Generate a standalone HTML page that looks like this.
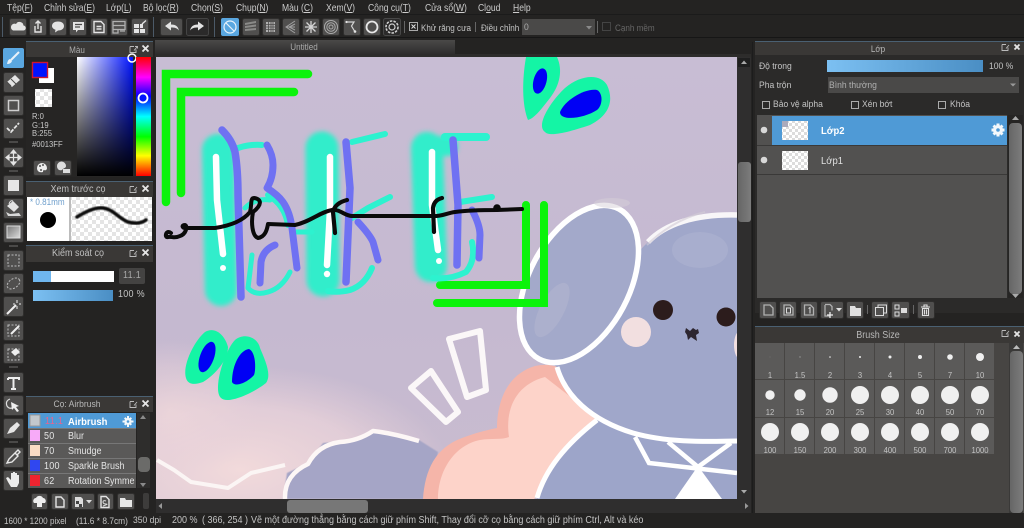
<!DOCTYPE html>
<html><head><meta charset="utf-8"><style>
html,body{margin:0;padding:0;background:#242322;overflow:hidden;width:1024px;height:528px}
body{position:relative;font-family:"Liberation Sans","Noto Sans CJK SC",sans-serif;font-size:10px;color:#c4c4c4}
#o{position:absolute;left:0;top:0;width:1024px;height:528px;overflow:hidden}
#w{position:absolute;left:0;top:0;width:1024px;height:528px;filter:blur(.35px)}
svg.m{position:absolute;left:0;top:0;display:block}
.t{position:absolute;white-space:nowrap;line-height:12px;transform:scaleX(.9);transform-origin:left center}
.c{transform:translateX(-50%) scaleX(.9);transform-origin:center}
.b{fill:#504f4e;stroke:#2f2e2d;stroke-width:1}
.i{fill:none;stroke:#e4e4e4;stroke-width:1.4}
.f{fill:#e4e4e4}
.g{fill:#a8a8a8}
.gs{fill:none;stroke:#b0b0b0;stroke-width:1.3}
.mn{top:2px;font-size:10.500px;color:#cccccc;transform:scaleX(.815)}
.st{top:515px;font-size:10px}
.r{font-size:10px;color:#e4e4e4}
.n{font-size:8.500px}
</style></head><body><div id="o"><div id="w">
<svg class="m" width="1024" height="528" viewBox="0 0 1024 528" xmlns="http://www.w3.org/2000/svg">
<defs>
<linearGradient id="bg" x1="0" y1="0" x2="0" y2="1"><stop offset="0" stop-color="#c8bdd4"/><stop offset=".6" stop-color="#c5b9d0"/><stop offset="1" stop-color="#c9bccf"/></linearGradient>
<radialGradient id="pk" gradientUnits="userSpaceOnUse" cx="0" cy="0" r="1" gradientTransform="translate(240 470) scale(210 105)"><stop offset="0" stop-color="#f2dadb"/><stop offset=".6" stop-color="#ead3da" stop-opacity=".75"/><stop offset="1" stop-color="#e6d0da" stop-opacity="0"/></radialGradient>
<radialGradient id="pk2" gradientUnits="userSpaceOnUse" cx="0" cy="0" r="1" gradientTransform="translate(170 410) scale(90 70)"><stop offset="0" stop-color="#f2dadb" stop-opacity=".6"/><stop offset=".6" stop-color="#ead3da" stop-opacity=".45"/><stop offset="1" stop-color="#e6d0da" stop-opacity="0"/></radialGradient>
<linearGradient id="hue" x1="0" y1="0" x2="0" y2="1"><stop offset="0" stop-color="#f00"/><stop offset=".17" stop-color="#f0f"/><stop offset=".33" stop-color="#00f"/><stop offset=".5" stop-color="#0ff"/><stop offset=".67" stop-color="#0f0"/><stop offset=".83" stop-color="#ff0"/><stop offset="1" stop-color="#f00"/></linearGradient>
<linearGradient id="h1" x1="0" y1="0" x2="1" y2="0"><stop offset="0" stop-color="#fff"/><stop offset="1" stop-color="#0013ff"/></linearGradient>
<linearGradient id="h2" x1="0" y1="0" x2="0" y2="1"><stop offset="0" stop-color="#000" stop-opacity="0"/><stop offset="1" stop-color="#000"/></linearGradient>
<linearGradient id="bar" x1="0" y1="0" x2="1" y2="0"><stop offset="0" stop-color="#7cc0f2"/><stop offset="1" stop-color="#4a8ec4"/></linearGradient>
<linearGradient id="tab" x1="0" y1="0" x2="0" y2="1"><stop offset="0" stop-color="#4a4948"/><stop offset="1" stop-color="#2e2d2d"/></linearGradient>
<linearGradient id="sb" x1="0" y1="0" x2="1" y2="0"><stop offset="0" stop-color="#666"/><stop offset="1" stop-color="#7c7c7c"/></linearGradient>
<linearGradient id="gr" x1="0" y1="0" x2="1" y2="1"><stop offset="0" stop-color="#777"/><stop offset="1" stop-color="#ddd"/></linearGradient>
<pattern id="ck" width="8" height="8" patternUnits="userSpaceOnUse"><rect width="8" height="8" fill="#fff"/><rect width="4" height="4" fill="#e4e4e4"/><rect x="4" y="4" width="4" height="4" fill="#e4e4e4"/></pattern>
<pattern id="ck2" width="6" height="6" patternUnits="userSpaceOnUse"><rect width="6" height="6" fill="#fff"/><rect width="3" height="3" fill="#dcdcdc"/><rect x="3" y="3" width="3" height="3" fill="#dcdcdc"/></pattern>
<filter id="gl" x="-60%" y="-20%" width="220%" height="140%"><feGaussianBlur stdDeviation="2.500"/></filter>
<filter id="s1"><feGaussianBlur stdDeviation=".5"/></filter>
<clipPath id="cv"><rect x="156" y="57" width="581" height="442"/></clipPath>
</defs>

<!-- chrome -->
<rect width="1024" height="528" fill="#242322"/>
<rect y="14" width="1024" height="1" fill="#1b1b1b"/>
<rect y="37" width="1024" height="1" fill="#161616"/>
<rect x="155" y="40" width="300" height="14" fill="url(#tab)"/>
<rect x="155" y="54" width="596" height="3" fill="#2d2c2b"/>

<!-- toolbar -->
<rect x="2" y="17" width="1" height="20" fill="#4c5a68"/>
<g>
<rect class="b" x="9.500" y="18.500" width="17" height="17" rx="2"/>
<rect class="b" x="29.500" y="18.500" width="17" height="17" rx="2"/>
<rect class="b" x="49.500" y="18.500" width="17" height="17" rx="2"/>
<rect class="b" x="69.500" y="18.500" width="17" height="17" rx="2"/>
<rect class="b" x="90.500" y="18.500" width="17" height="17" rx="2"/>
<rect class="b" x="110.500" y="18.500" width="17" height="17" rx="2"/>
<rect class="b" x="131.500" y="18.500" width="17" height="17" rx="2"/>
<rect x="153" y="17" width="1" height="20" fill="#4c5a68"/>
<rect class="b" x="160.500" y="18.500" width="22" height="17" rx="2"/>
<rect x="186.500" y="18.500" width="22" height="17" rx="2" fill="#2b2a2a" stroke="#444"/>
<rect x="214" y="17" width="1" height="20" fill="#4c5a68"/>
<rect x="221" y="18" width="18" height="18" rx="2" fill="#5aa7e0"/>
<rect class="b" x="242.500" y="18.500" width="17" height="17" rx="2"/>
<rect class="b" x="262.500" y="18.500" width="17" height="17" rx="2"/>
<rect class="b" x="282.500" y="18.500" width="17" height="17" rx="2"/>
<rect class="b" x="302.500" y="18.500" width="17" height="17" rx="2"/>
<rect class="b" x="322.500" y="18.500" width="17" height="17" rx="2"/>
<rect class="b" x="343.500" y="18.500" width="17" height="17" rx="2"/>
<rect class="b" x="363.500" y="18.500" width="17" height="17" rx="2"/>
<rect x="383.500" y="18.500" width="17" height="17" rx="2" fill="#2b2a2a" stroke="#484848"/>
</g>
<!-- toolbar icons -->
<path class="f" d="M13 30.500h10a2.500 2.500 0 0 0 .5-5 4 4 0 0 0-7.500-1.500 3.300 3.300 0 0 0-3 6.500z"/>
<path class="i" d="M35 26v6h6v-6M38 29v-8M35.500 23.500L38 21l2.500 2.500"/>
<path class="f" d="M52 26c0-3 2.700-4.500 6-4.500s6 1.500 6 4.500-2.700 4.500-6 4.500l-3 2 .5-2.700c-2-.7-3.500-2-3.500-3.800z"/>
<path class="f" d="M73 22h11v8h-6l-2 2.500V30h-3z"/><path d="M75 24.500h7M75 27h5" stroke="#4b4a49" stroke-width="1.200"/>
<path class="i" d="M94 21.500h7l3 3v8h-10z"/><path class="i" d="M96.500 26.500h5M96.500 29h5" stroke-width="1"/>
<path class="gs" d="M113 21.500h12v4h-12zM113 25.500h12v4h-12zM113 29.500h5v3.500h-5zM120 31h5"/>
<path class="f" d="M134 24h5v4h-5zM140 24h3v4h-3zM134 29h5v4h-5zM140 29h5v4h-5z"/><path class="i" d="M142 24l4-3.500"/>
<path class="f" d="M165 26l6-4.500v3c5 0 7 2 8 6-2-2.500-4-3-8-3v3z"/>
<path class="f" d="M204 26l-6-4.500v3c-5 0-7 2-8 6 2-2.500 4-3 8-3v3z"/>
<circle cx="230" cy="27" r="6" fill="none" stroke="#e8f2fa" stroke-width="1.200"/><path d="M226 23l8 8" stroke="#e8f2fa" stroke-width="1.200"/>
<path d="M245 23l11-2v2l-11 2zM245 26l11-1.500v2l-11 1.500zM245 29l11-1v2l-11 1z" fill="#8a8a88"/>
<path d="M266 22h9v10h-9z" fill="#b0b0b0"/><path d="M266 24.500h9M266 27h9M266 29.500h9M268.500 22v10M271 22v10M273 22v10" stroke="#4b4a49" stroke-width=".8"/>
<path d="M295 21l-9 6 9 6M295 24l-6 3 6 3M286 27h9" fill="none" stroke="#a0a0a0" stroke-width="1"/>
<path d="M305 27h12M311 21v12M306.500 22.500l9 9M315.500 22.500l-9 9" stroke="#d4d4d4" stroke-width="1.300"/>
<circle cx="331" cy="27" r="6.500" fill="none" stroke="#aaa" stroke-width="1"/><circle cx="331" cy="27" r="4.200" fill="none" stroke="#aaa" stroke-width="1"/><circle cx="331" cy="27" r="2" fill="none" stroke="#aaa" stroke-width="1"/>
<path d="M347 22h7l-2.500 4 3 5" fill="none" stroke="#d4d4d4" stroke-width="1.200"/><circle cx="346.500" cy="22" r="1.100" fill="#e4e4e4"/><circle cx="355" cy="31.500" r="1.300" fill="#e4e4e4"/>
<circle cx="372" cy="27" r="5.500" fill="none" stroke="#e8e8e8" stroke-width="1.800"/>
<circle cx="392" cy="27" r="3" fill="none" stroke="#cfcfcf" stroke-width="1.200"/><circle cx="392" cy="27" r="6" fill="none" stroke="#cfcfcf" stroke-width="1.600" stroke-dasharray="2.500 1.200"/>
<rect x="404" y="21" width="1" height="12" fill="#666"/>
<rect x="409.500" y="22.500" width="8" height="8" fill="none" stroke="#aaa"/><path d="M411.500 24.500l4 4M415.500 24.500l-4 4" stroke="#ddd"/>
<rect x="475" y="22" width="1" height="10" fill="#666"/>
<rect x="522" y="19" width="73" height="16" fill="#4a4948"/><path d="M586 26h6l-3 3.500z" fill="#8a8a8a"/>
<rect x="597" y="21" width="1" height="12" fill="#666"/>
<rect x="602.500" y="22.500" width="8" height="8" fill="none" stroke="#444"/>

<!-- canvas -->
<g clip-path="url(#cv)">
<rect x="156" y="57" width="581" height="442" fill="url(#bg)"/>
<rect x="156" y="365" width="294" height="134" fill="url(#pk)"/>
<rect x="156" y="340" width="104" height="140" fill="url(#pk2)"/>
<!-- clouds -->
<path d="M283 499L287 473 308 463 323 443 358 440 373 430 392 433 419 440 438 452 430 499Z" fill="#a5a5c6" filter="url(#s1)"/>
<path d="M157 460L174 470 191 482 228 488 251 473 285 465" fill="none" stroke="#fbf5f4" stroke-width="4" stroke-linejoin="round"/>
<path d="M285 499Q284 475 308 464 318 445 340 442 358 441 373 431 392 433 419 441 436 452" fill="none" stroke="#fdf7f6" stroke-width="4.500" stroke-linejoin="round"/>
<!-- heart -->
<path d="M423 499C425 470 435 448 462 438 475 433 487 430 497 428 497 405 505 375 535 366 545 364 552 365 557 367L600 420 534 499Z" fill="#f5b5a9"/>
<path d="M438 499C438 470 455 445 480 440 492 438 502 440 509 437 505 410 515 385 545 377L600 420 534 499Z" fill="#fdd3c9"/>
<!-- head/body -->
<path d="M595 420C565 445 545 470 537 499H737V425Z" fill="#9da5c9"/>
<path d="M597 420C565 445 545 470 537 498" fill="none" stroke="#fff" stroke-width="5"/>
<path d="M737 215C700 213 665 225 645 245L540 355 557 367C565 395 590 420 633 433 665 442 700 440 737 440Z" fill="#a0a7ca"/>
<path d="M557 367C565 395 590 420 633 433 665 442 700 442 737 441" fill="none" stroke="#fff" stroke-width="5"/>
<path d="M648 242C665 224 695 214 737 215" fill="none" stroke="#f8f6f8" stroke-width="5.500"/>
<path d="M647 245C660 232 680 218 705 212" fill="none" stroke="#d2cbd6" stroke-width="2" opacity=".6"/>
<ellipse cx="579" cy="284" rx="50" ry="85" transform="rotate(28 579 284)" fill="#a3a9ca" stroke="#fff" stroke-width="5.500"/>
<ellipse cx="612" cy="203" rx="18" ry="5" fill="#d6cfd7" opacity=".5"/>
<ellipse cx="552" cy="310" rx="12" ry="30" transform="rotate(28 552 310)" fill="#b6b8d0" opacity=".5"/>
<ellipse cx="700" cy="250" rx="28" ry="18" fill="#b0b6d2" opacity=".5"/>
<circle cx="663" cy="310" r="10" fill="#2c1c1c"/>
<circle cx="726" cy="317" r="9.500" fill="#2c1c1c"/>
<circle cx="636" cy="332" r="15" fill="#f2dfe0"/>
<ellipse cx="740" cy="345" rx="6" ry="14" fill="#f2dfe0"/>
<path d="M686 328l4 3 3-3 3 2 2-1 1 4-3 2 1 6-3-2-3-2-3 3-1-5-2-3z" fill="#2d2630"/>
<path d="M635 437L649 463 737 473M668 442L698 467M731 443L698 467" fill="none" stroke="#fff" stroke-width="4.500"/>
<path d="M675 499L698 466 722 499Z" fill="#fff"/>
<!-- exclaim -->
<path d="M449 339L480 331 486 390 467 397Z" fill="none" stroke="#fbf7f8" stroke-width="6" stroke-linejoin="round"/>
<path d="M411 388L431 371 458 412 446 422Z" fill="none" stroke="#fbf7f8" stroke-width="6" stroke-linejoin="round"/>
<!-- green -->
<path d="M308 74H166V202M294 92H181V193" fill="none" stroke="#0bf30b" stroke-width="8.500" stroke-linejoin="miter" stroke-linecap="round"/>
<path d="M526 205V285H440M544 205V303H437" fill="none" stroke="#0bf30b" stroke-width="8" stroke-linejoin="miter" stroke-linecap="round"/>
<!-- glow -->
<g filter="url(#gl)" fill="none" stroke="#33edcb" stroke-linecap="round" stroke-linejoin="round">
<path d="M218 150L221 290" stroke-width="32"/>
<path d="M322 148L323 280" stroke-width="33"/>
<path d="M427 148L431 266" stroke-width="32"/>
<path d="M432 146L448 146" stroke-width="20"/>
</g>
<g fill="none" stroke="#2df2cf" stroke-linecap="round" stroke-linejoin="round">
<path d="M238 148Q250 144 262 145" stroke-width="6"/>
<path d="M268 195Q285 205 288 225" stroke-width="6"/>
<path d="M245 208Q255 198 270 200" stroke-width="5"/>
<path d="M252 255L248 288Q255 296 268 292 282 288 290 272" stroke-width="5"/>
<path d="M352 142L385 134" stroke-width="6"/>
<path d="M352 218L368 208 390 197" stroke-width="6"/>
<path d="M372 268Q365 285 350 290 338 293 328 291" stroke-width="6"/>
<path d="M445 137H486" stroke-width="8"/>
<path d="M460 202L492 197" stroke-width="6"/>
<path d="M472 242Q476 260 466 272 450 280 433 278" stroke-width="6"/>
<path d="M295 232L312 232" stroke-width="5"/>
</g>
<!-- purple -->
<g fill="none" stroke="#6f71f2" stroke-linecap="round" stroke-linejoin="round" stroke-width="7.500">
<path d="M222 130Q232 140 235 152 238 170 238 195L241 297"/>
<path d="M267 145Q273 155 273 165 273 178 267 188 278 195 283 202 290 212 292 228L297 268" stroke-width="7"/>
<path d="M275 245Q263 250 261 262L260 283" stroke-width="7"/>
<path d="M346 142L350 188 346 282"/>
<path d="M358 222Q370 235 373 242L378 260" stroke-width="7"/>
<path d="M453 140L458 205 457 265"/>
<path d="M472 210Q480 225 480 235L479 258" stroke-width="7"/>
</g>
<!-- white -->
<g fill="none" stroke="#fff" stroke-linecap="round" stroke-width="6.500">
<path d="M216 157L217 200 223 254"/>
<path d="M330 157L330 210 327 265"/>
<path d="M432 152L432 205 438 250"/>
</g>
<circle cx="223" cy="268" r="3" fill="#fff"/><circle cx="327" cy="274" r="3.200" fill="#fff"/><circle cx="439" cy="261" r="3" fill="#fff"/>
<!-- black line -->
<path d="M171 233C166 229 164 238 168 237 172 236 174 239 180 236 186 234 188 226 185 225 181 225 182 229 188 228L215 228C228 226 242 222 250 212 252 205 250 198 254 198 262 199 262 205 253 212 251 222 252 236 258 238 265 237 267 230 268 224L295 225C310 222 320 212 332 210 340 209 345 216 352 216L375 216 432 216C440 217 447 213 455 212 470 210 485 210 497 210L522 209" fill="none" stroke="#0a0a0a" stroke-width="4" stroke-linecap="round" stroke-linejoin="round"/>
<path d="M335 233L333 212Q335 203 347 200M434 232L433 208Q434 200 442 198" fill="none" stroke="#0a0a0a" stroke-width="4.200" stroke-linecap="round"/>
<circle cx="497" cy="208" r="3.800" fill="#0a0a0a"/>
<!-- butterflies -->
<g fill="#14f5a5">
<path d="M528 120C522 105 522 80 526 57L557 57C563 70 560 85 550 98 542 108 535 118 528 120Z"/>
<path d="M545 132C535 125 552 100 565 88 580 75 600 73 607 85 614 100 610 115 590 125 575 130 550 138 545 132Z"/>
<path d="M186 378C182 365 195 340 205 332 215 326 225 335 228 347 228 360 215 375 203 382 195 385 188 385 186 378Z"/>
<path d="M221 398C212 390 225 350 235 340 245 332 258 338 260 348 265 360 272 375 266 383 255 392 228 405 221 398Z"/>
</g>
<g fill="#0000f5">
<ellipse cx="540" cy="81" rx="6.500" ry="13" transform="rotate(15 540 81)"/>
<path d="M560 112C565 100 585 88 597 90 603 93 603 105 597 110 585 118 560 122 560 112Z"/>
<ellipse cx="207" cy="357" rx="7" ry="16" transform="rotate(20 207 357)"/>
<path d="M232 382C232 365 240 350 249 349 256 352 256 370 254 375 248 382 235 388 232 382Z"/>
</g>
</g>

<!-- canvas scrollbars -->
<rect x="737" y="57" width="14" height="456" fill="#2f2e2e"/>
<rect x="738" y="58" width="12" height="9" fill="#1f1f1f"/><path d="M741 64l3-3.500 3 3.500z" fill="#aaa"/>
<rect x="738" y="162" width="13" height="60" rx="3" fill="url(#sb)"/>
<path d="M741 490l3 3.500 3-3.500z" fill="#aaa"/>
<rect x="156" y="499" width="595" height="14" fill="#2f2e2e"/>
<rect x="287" y="500" width="81" height="13" rx="3" fill="#777"/>
<path d="M162 503v6l-3.500-3z" fill="#999"/><path d="M745 503v6l3.500-3z" fill="#999"/>

<!-- left tools -->
<rect x="3" y="48" width="21" height="20" rx="2" fill="#5aa7e0"/>
<path d="M19 52L11 60" stroke="#e8f2fa" stroke-width="2"/><path d="M7 64Q8 59 10 59L12 61Q11 64 7 64Z" fill="#e8f2fa"/>
<g>
<rect class="b" x="3.500" y="72.500" width="20" height="20" rx="2"/>
<rect class="b" x="3.500" y="95.500" width="20" height="20" rx="2"/>
<rect class="b" x="3.500" y="118.500" width="20" height="20" rx="2"/>
<rect class="b" x="3.500" y="147.500" width="20" height="20" rx="2"/>
<rect class="b" x="3.500" y="175.500" width="20" height="20" rx="2"/>
<rect class="b" x="3.500" y="198.500" width="20" height="20" rx="2"/>
<rect class="b" x="3.500" y="222.500" width="20" height="20" rx="2"/>
<rect class="b" x="3.500" y="250.500" width="20" height="20" rx="2"/>
<rect class="b" x="3.500" y="273.500" width="20" height="20" rx="2"/>
<rect class="b" x="3.500" y="296.500" width="20" height="20" rx="2"/>
<rect class="b" x="3.500" y="320.500" width="20" height="20" rx="2"/>
<rect class="b" x="3.500" y="343.500" width="20" height="20" rx="2"/>
<rect class="b" x="3.500" y="372.500" width="20" height="20" rx="2"/>
<rect class="b" x="3.500" y="395.500" width="20" height="20" rx="2"/>
<rect class="b" x="3.500" y="418.500" width="20" height="20" rx="2"/>
<rect class="b" x="3.500" y="447.500" width="20" height="20" rx="2"/>
<rect class="b" x="3.500" y="470.500" width="20" height="20" rx="2"/>
</g>
<g fill="#4a4948"><rect x="9" y="141" width="9" height="2"/><rect x="9" y="170" width="9" height="2"/><rect x="9" y="245" width="9" height="2"/><rect x="9" y="366" width="9" height="2"/><rect x="9" y="441" width="9" height="2"/></g>
<path d="M7 82l8-7 5 5-8 7z" class="f"/><path d="M7 82l4 4" stroke="#4b4a49"/><path d="M11 79l5 5" stroke="#4b4a49"/>
<rect x="8.500" y="100.500" width="10" height="10" fill="none" stroke="#cfcfcf" stroke-width="1.500"/>
<path d="M7 128l4 4 8-9" fill="none" stroke="#e4e4e4" stroke-width="1.800" stroke-dasharray="4 1.200"/>
<path d="M13.500 150v15M6 157.500h15M13.500 150l-2.500 3h5zM13.500 165l-2.500-3h5zM6 157.500l3-2.500v5zM21 157.500l-3-2.500v5z" fill="#e4e4e4" stroke="#e4e4e4" stroke-width="1.200"/>
<rect x="8" y="180" width="11" height="11" fill="#e6e6e6"/>
<path d="M7 206l6-5 6 6-5 5z" fill="#e4e4e4"/><path d="M9 204q1-4 4-3" fill="none" stroke="#e4e4e4"/><path d="M6 212l4 2 9-1 2 3h-13z" fill="#d8d8d8"/>
<rect x="7" y="226" width="13" height="12" fill="url(#gr)" stroke="#ddd"/>
<rect x="8" y="255" width="11" height="11" fill="none" stroke="#bdbdbd" stroke-dasharray="2 1.500"/>
<ellipse cx="13.500" cy="283.500" rx="7" ry="4.500" transform="rotate(-35 13.500 283.500)" fill="none" stroke="#bdbdbd" stroke-dasharray="2 1.500"/>
<path d="M7 314l9-9" stroke="#eee" stroke-width="2"/><path d="M17 300v3M17 306v3M13 304h2M19 304h2" stroke="#eee"/>
<rect x="8" y="325" width="11" height="11" fill="none" stroke="#bdbdbd" stroke-dasharray="2 1.500"/><path d="M11 334l8-8" stroke="#eee" stroke-width="2"/>
<rect x="8" y="349" width="11" height="11" fill="none" stroke="#bdbdbd" stroke-dasharray="2 1.500"/><path d="M11 352l5-4 4 4-5 4z" fill="#eee"/>
<path d="M13.500 378v11M8 378h11v2M8 378v2M11 389h5" stroke="#eee" stroke-width="2" fill="none"/>
<path d="M10 399Q5 401 7 406 9 409 12 408" fill="none" stroke="#ddd" stroke-width="1.200"/><path d="M11 402l8 4-3 1 3 4-2 1-3-4-2 2z" fill="#eee"/>
<path d="M7 434l3-6 7-6 3 3-6 7z" fill="#e4e4e4"/>
<path d="M7 463l2-4 6-6 3 3-6 6zM15 453l3-3 2 2-3 3" fill="none" stroke="#e6e6e6" stroke-width="1.400"/>
<path d="M8 482l-2-4 2-1 3 3v-7h2v5-6h2v6-5h2v6-4h2v8l-2 4h-6z" fill="#ececec"/>

<!-- colour panel -->
<rect x="26" y="40" width="127" height="137" fill="#262524"/>
<rect x="26" y="41" width="127" height="1" fill="#4a6072"/>
<rect x="26" y="42" width="127" height="15" fill="#3a3836"/>
<path d="M130 46.500h4M130 46.500v6h6v-3M134 50.500l3-3.500M135 46.500h2.500v2" fill="none" stroke="#bbb" stroke-width=".9"/>
<path d="M142.500 45.500l6 6M148.500 45.500l-6 6" stroke="#e6e6e6" stroke-width="1.800"/>
<rect x="77" y="57" width="56" height="119" fill="url(#h1)"/><rect x="77" y="57" width="56" height="119" fill="url(#h2)"/>
<circle cx="132" cy="58" r="4" fill="none" stroke="#fff" stroke-width="1.500"/>
<rect x="136" y="57" width="15" height="119" fill="url(#hue)"/>
<circle cx="143" cy="98" r="4.500" fill="#0013ff" stroke="#fff" stroke-width="1.800"/>
<rect x="39" y="68" width="15" height="15" fill="#fff"/>
<rect x="32.500" y="62.500" width="15" height="15" fill="#0013ff" stroke="#d01530" stroke-width="1.400"/>
<rect x="35" y="89" width="17" height="18" fill="url(#ck)"/>
<rect class="b" x="33.500" y="160.500" width="17" height="15" rx="2"/>
<rect class="b" x="54.500" y="160.500" width="17" height="15" rx="2"/>
<path d="M37 168a5 5 0 0 1 10 0 2 2 0 0 1-3 2q-1 0-1 2c-4 1-6-1-6-4z" fill="#eee"/><circle cx="40" cy="166" r="1" fill="#555"/><circle cx="43" cy="165" r="1" fill="#555"/><circle cx="41" cy="170" r="1" fill="#555"/>
<path d="M57 166a4 4 0 0 1 9 0c0 2-2 2-3 3l-1 1c-3 1-5-1-5-4z" fill="#ddd"/><rect x="63" y="169" width="7" height="4" fill="#ddd"/>

<!-- preview -->
<rect x="26" y="181" width="127" height="1" fill="#4a6072"/>
<rect x="26" y="182" width="127" height="15" fill="#3a3836"/>
<path d="M130 186.500h4M130 186.500v6h6v-3M134 190.500l3-3.500" fill="none" stroke="#bbb" stroke-width=".9"/>
<path d="M142.500 185.500l6 6M148.500 185.500l-6 6" stroke="#e6e6e6" stroke-width="1.800"/>
<rect x="27" y="197" width="42" height="44" fill="#fff"/>
<rect x="69" y="197" width="2" height="44" fill="#bcbcbc"/>
<rect x="71" y="197" width="81" height="44" fill="url(#ck)"/>
<circle cx="48" cy="220" r="8" fill="#000"/>
<path d="M77 217C85 212 95 207 103 208 113 209 118 218 128 222 136 224 142 223 146 220" fill="none" stroke="#111" stroke-width="3.500" stroke-linecap="round" filter="url(#s1)"/>

<!-- control -->
<rect x="26" y="245" width="127" height="1" fill="#4a6072"/>
<rect x="26" y="246" width="127" height="16" fill="#3a3836"/>
<path d="M130 250.500h4M130 250.500v6h6v-3M134 254.500l3-3.500" fill="none" stroke="#bbb" stroke-width=".9"/>
<path d="M142.500 249.500l6 6M148.500 249.500l-6 6" stroke="#e6e6e6" stroke-width="1.800"/>
<rect x="33" y="271" width="81" height="11" fill="#fff"/><rect x="33" y="271" width="18" height="11" fill="#6fb6ee"/>
<rect x="119" y="268" width="26" height="16" rx="2" fill="#444342"/>
<rect x="33" y="290" width="80" height="11" fill="url(#bar)"/>

<!-- brush -->
<rect x="26" y="396" width="127" height="1" fill="#4a6072"/>
<rect x="26" y="397" width="127" height="15" fill="#3a3836"/>
<path d="M130 401.500h4M130 401.500v6h6v-3M134 405.500l3-3.500" fill="none" stroke="#bbb" stroke-width=".9"/>
<path d="M142.500 400.500l6 6M148.500 400.500l-6 6" stroke="#e6e6e6" stroke-width="1.800"/>
<rect x="28" y="413" width="108" height="75" fill="#5a5958"/>
<rect x="28" y="413" width="108" height="15" fill="#4f9ad6"/>
<g fill="#777"><rect x="28" y="443" width="108" height="1"/><rect x="28" y="458" width="108" height="1"/><rect x="28" y="473" width="108" height="1"/><rect x="28" y="428" width="108" height="1"/></g>
<rect x="30" y="415" width="10" height="11" fill="#c2c8cc" stroke="#999"/>
<rect x="30" y="430" width="10" height="11" fill="#f7aaf8"/>
<rect x="30" y="445" width="10" height="11" fill="#fbdcc4"/>
<rect x="30" y="460" width="10" height="11" fill="#3047f0"/>
<rect x="30" y="475" width="10" height="11" fill="#ef2430"/>
<g fill="#f4f8fb"><circle cx="128" cy="421.500" r="3.600"/><path d="M127 416h2v11h-2zM122.500 420.500h11v2h-11z"/><path d="M124 418.500l1.400-1.400 6.600 7-1.400 1.400zM132 418.500l-1.400-1.400-6.600 7 1.400 1.400z"/></g>
<circle cx="128" cy="421.500" r="1.300" fill="#4f9ad6"/>
<rect x="137" y="413" width="13" height="75" fill="#2e2d2c"/>
<rect x="138" y="457" width="12" height="15" rx="4" fill="#6b6b69"/>
<path d="M140 419l3-4 3 4zM140 483l3 4 3-4z" fill="#8a8a8a"/>
<rect class="b" x="31.500" y="493.500" width="16" height="16" rx="2"/>
<rect class="b" x="51.500" y="493.500" width="17" height="16" rx="2"/>
<rect class="b" x="71.500" y="493.500" width="23" height="16" rx="2"/>
<rect class="b" x="97.500" y="493.500" width="16" height="16" rx="2"/>
<rect class="b" x="117.500" y="493.500" width="17" height="16" rx="2"/>
<rect x="143" y="493" width="6" height="16" rx="2" fill="#3d3c3b"/>
<path d="M34 503a3 3 0 0 1 2-5 4 4 0 0 1 7 0 3 3 0 0 1 2 5h-3v4h-5v-4z" fill="#eee"/>
<path class="i" d="M56 497h5l3 3v7h-8z" stroke-width="1.100"/>
<path d="M75 497h6l2 2v8h-8z" fill="#ddd"/><rect x="76" y="501" width="3" height="3" fill="#444"/><rect x="79" y="504" width="3" height="3" fill="#444"/><path d="M86 500h6l-3 3.500z" fill="#ddd"/>
<path class="i" d="M101 496.500h5l3 3v8h-8z" stroke-width="1.100"/><path d="M106 501q-3-1-3 1t3 2-3 2" fill="none" stroke="#ddd"/>
<path d="M120 498h5l1 2h6v7h-12z" fill="#e6e6e6"/>

<!-- layer panel -->
<rect x="755" y="41" width="269" height="1" fill="#4a6072"/>
<rect x="755" y="42" width="269" height="13" fill="#3a3836"/>
<rect x="755" y="55" width="269" height="258" fill="#2b2a29"/>
<path d="M1002 44.500h4M1002 44.500v6h6v-3M1006 48.500l3-3.500" fill="none" stroke="#bbb" stroke-width=".9"/>
<path d="M1014.500 44.500l5 5M1019.500 44.500l-5 5" stroke="#e6e6e6" stroke-width="1.800"/>
<rect x="827" y="60" width="156" height="12" fill="url(#bar)"/>
<rect x="828" y="77" width="191" height="16" fill="#4a4948"/><path d="M1010 83.500h6l-3 3z" fill="#999"/>
<rect x="762.500" y="101.500" width="7" height="7" fill="none" stroke="#aaa"/>
<rect x="851.500" y="101.500" width="7" height="7" fill="none" stroke="#aaa"/>
<rect x="938.500" y="101.500" width="7" height="7" fill="none" stroke="#aaa"/>
<rect x="757" y="115" width="250" height="183" fill="#525150"/>
<rect x="772" y="116" width="235" height="29" fill="#4f9ad6"/>
<rect x="757" y="145" width="250" height="1" fill="#3a3938"/>
<rect x="757" y="174" width="250" height="1" fill="#3a3938"/>
<circle cx="764" cy="130" r="3.300" fill="#d8d8d8"/><circle cx="764" cy="160" r="3.300" fill="#d8d8d8"/>
<rect x="782" y="121" width="26" height="19" fill="url(#ck2)"/><rect x="782" y="121" width="6" height="6" fill="#aab"/>
<rect x="782" y="151" width="26" height="19" fill="url(#ck2)"/>
<g fill="#f4f8fb"><circle cx="998" cy="130" r="5"/><path d="M996.500 123.500h3v13h-3zM991.500 128.500h13v3h-13z"/><path d="M992.500 126.500l2-2 9 9-2 2zM1003.500 126.500l-2-2-9 9 2 2z"/></g>
<circle cx="998" cy="130" r="1.800" fill="#4f9ad6"/>
<rect x="1008" y="115" width="15" height="183" fill="#262524"/>
<rect x="1009" y="123" width="13" height="171" rx="4" fill="url(#sb)"/>
<path d="M1012 120l3.500-4 3.500 4zM1012 294l3.500 4 3.500-4z" fill="#aaa"/>
<rect class="b" x="759.500" y="301.500" width="17" height="17" rx="2"/>
<rect class="b" x="779.500" y="301.500" width="17" height="17" rx="2"/>
<rect class="b" x="800.500" y="301.500" width="17" height="17" rx="2"/>
<rect class="b" x="820.500" y="301.500" width="23" height="17" rx="2"/>
<rect class="b" x="846.500" y="301.500" width="17" height="17" rx="2"/>
<rect x="867" y="305" width="1" height="9" fill="#666"/>
<rect class="b" x="871.500" y="301.500" width="17" height="17" rx="2"/>
<rect class="b" x="891.500" y="301.500" width="18" height="17" rx="2"/>
<rect x="913" y="305" width="1" height="9" fill="#666"/>
<rect class="b" x="917.500" y="301.500" width="17" height="17" rx="2"/>
<path class="gs" d="M764 305h6l3 3v7h-9zM784 305h6l3 3v7h-9zM804.500 305h6l3 3v7h-9zM825 304.500h5l2 2v4M830 316h-5v-11" stroke="#cfcfcf"/>
<rect x="786.500" y="308" width="4" height="5" fill="none" stroke="#ddd"/>
<path d="M808.500 308.500l1.500-1v6" fill="none" stroke="#ddd"/>
<path d="M830 312v6M827 315h6" stroke="#eee" stroke-width="1.300"/><path d="M836 308h6l-3 3.500z" fill="#e0e0e0"/>
<path d="M850 306h5l1 2h5v8h-11z" fill="#e0e0e0"/>
<rect x="875.500" y="307.500" width="8" height="8" fill="none" stroke="#ddd"/><path d="M878 307.500v-2.500h8.500v8h-3" fill="none" stroke="#ddd"/>
<rect x="895" y="305" width="4" height="4" fill="none" stroke="#ddd"/><rect x="895" y="312" width="4" height="4" fill="none" stroke="#ddd"/><rect x="901" y="308" width="6" height="5" fill="#ddd"/>
<path d="M921 307h9M924 307v-2h3v2M922.500 308.500h6v7h-6zM924.500 309.500v5M926.500 309.500v5" fill="none" stroke="#e0e0e0" stroke-width="1.100"/>

<!-- brush size panel -->
<rect x="755" y="326" width="269" height="1" fill="#4a6072"/>
<rect x="755" y="327" width="269" height="16" fill="#3a3836"/>
<rect x="755" y="343" width="269" height="170" fill="#474543"/>
<path d="M1002 330.500h4M1002 330.500v6h6v-3M1006 334.500l3-3.500" fill="none" stroke="#bbb" stroke-width=".9"/>
<path d="M1014.500 331.500l5 5M1019.500 331.500l-5 5" stroke="#e6e6e6" stroke-width="1.800"/>
<g fill="#5b5a59">
<rect x="755" y="343" width="29" height="36"/><rect x="785" y="343" width="29" height="36"/><rect x="815" y="343" width="29" height="36"/><rect x="845" y="343" width="29" height="36"/><rect x="875" y="343" width="29" height="36"/><rect x="905" y="343" width="29" height="36"/><rect x="935" y="343" width="29" height="36"/><rect x="965" y="343" width="29" height="36"/>
<rect x="755" y="380" width="29" height="37"/><rect x="785" y="380" width="29" height="37"/><rect x="815" y="380" width="29" height="37"/><rect x="845" y="380" width="29" height="37"/><rect x="875" y="380" width="29" height="37"/><rect x="905" y="380" width="29" height="37"/><rect x="935" y="380" width="29" height="37"/><rect x="965" y="380" width="29" height="37"/>
<rect x="755" y="418" width="29" height="36"/><rect x="785" y="418" width="29" height="36"/><rect x="815" y="418" width="29" height="36"/><rect x="845" y="418" width="29" height="36"/><rect x="875" y="418" width="29" height="36"/><rect x="905" y="418" width="29" height="36"/><rect x="935" y="418" width="29" height="36"/><rect x="965" y="418" width="29" height="36"/>
</g>
<g fill="#f0f0f0">
<circle cx="770" cy="357" r=".4" fill="#888"/><circle cx="800" cy="357" r=".7" fill="#999"/><circle cx="830" cy="357" r=".8"/><circle cx="860" cy="357" r="1"/><circle cx="890" cy="357" r="1.500"/><circle cx="920" cy="357" r="2"/><circle cx="950" cy="357" r="2.800"/><circle cx="980" cy="357" r="4"/>
<circle cx="770" cy="395" r="4.700"/><circle cx="800" cy="395" r="5.700"/><circle cx="830" cy="395" r="7.700"/><circle cx="860" cy="395" r="9"/><circle cx="890" cy="395" r="9"/><circle cx="920" cy="395" r="9"/><circle cx="950" cy="395" r="9"/><circle cx="980" cy="395" r="9"/>
<circle cx="770" cy="432" r="9"/><circle cx="800" cy="432" r="9"/><circle cx="830" cy="432" r="9"/><circle cx="860" cy="432" r="9"/><circle cx="890" cy="432" r="9"/><circle cx="920" cy="432" r="9"/><circle cx="950" cy="432" r="9"/><circle cx="980" cy="432" r="9"/>
</g>
<rect x="1009" y="343" width="14" height="170" fill="#3a3938"/>
<rect x="1010" y="351" width="13" height="162" rx="4" fill="url(#sb)"/>
<path d="M1013 349l3.500-4 3.500 4z" fill="#bbb"/>
<rect x="752" y="42" width="1" height="471" fill="#1c1c1c"/>
</svg>

<!-- menu -->
<div class="t mn" style="left:7px">Tệp(<u>F</u>)</div>
<div class="t mn" style="left:44px">Chỉnh sửa(<u>E</u>)</div>
<div class="t mn" style="left:106px">Lớp(<u>L</u>)</div>
<div class="t mn" style="left:143px">Bộ lọc(<u>R</u>)</div>
<div class="t mn" style="left:191px">Chọn(<u>S</u>)</div>
<div class="t mn" style="left:236px">Chụp(<u>N</u>)</div>
<div class="t mn" style="left:282px">Màu (<u>C</u>)</div>
<div class="t mn" style="left:326px">Xem(<u>V</u>)</div>
<div class="t mn" style="left:368px">Công cụ(<u>T</u>)</div>
<div class="t mn" style="left:425px">Cửa sổ(<u>W</u>)</div>
<div class="t mn" style="left:478px">Cl<u>o</u>ud</div>
<div class="t mn" style="left:513px"><u>H</u>elp</div>

<div class="t" style="left:421px;top:22px;font-size:9px">Khử răng cưa</div>
<div class="t" style="left:481px;top:22px;font-size:9px">Điều chỉnh</div>
<div class="t" style="left:524px;top:22px;font-size:9.500px;color:#aaa">0</div>
<div class="t" style="left:615px;top:22px;font-size:9px;color:#666">Cạnh mềm</div>
<div class="t c" style="left:304px;top:41px;font-size:9px;color:#aaa">Untitled</div>

<!-- left panels -->
<div class="t c" style="left:77px;top:44px;font-size:9px;color:#aaa">Màu</div>
<div class="t" style="left:32px;top:112px;font-size:8.500px;line-height:8.500px;color:#c8c8c8">R:0<br>G:19<br>B:255</div>
<div class="t" style="left:32px;top:138px;font-size:8.500px;color:#c8c8c8">#0013FF</div>
<div class="t c" style="left:78px;top:184px;font-size:10px;color:#c0c0c0">Xem trước cọ</div>
<div class="t" style="left:30px;top:196px;font-size:9px;color:#6f9fcc">* 0.81mm</div>
<div class="t c" style="left:78px;top:248px;font-size:10px;color:#c0c0c0">Kiểm soát cọ</div>
<div class="t c" style="left:132px;top:270px;font-size:10px;color:#aaa;letter-spacing:.3px">11.1</div>
<div class="t" style="left:118px;top:289px;font-size:10px;letter-spacing:.3px">100 %</div>
<div class="t c" style="left:77px;top:399px;font-size:9.500px;color:#b8b8b8">Cọ: Airbrush</div>
<div class="t" style="left:45px;top:416px;font-size:10px;color:#e8648f;letter-spacing:.4px">11.1</div>
<div class="t" style="left:68px;top:416px;font-size:10.500px;color:#fff;font-weight:bold">Airbrush</div>
<div class="t r" style="left:44px;top:431px;letter-spacing:.3px">50</div>
<div class="t r" style="left:68px;top:431px">Blur</div>
<div class="t r" style="left:44px;top:446px;letter-spacing:.3px">70</div>
<div class="t r" style="left:68px;top:446px">Smudge</div>
<div class="t r" style="left:44px;top:461px;letter-spacing:.3px">100</div>
<div class="t r" style="left:68px;top:461px">Sparkle Brush</div>
<div class="t r" style="left:44px;top:476px;letter-spacing:.3px">62</div>
<div class="t r" style="left:68px;top:476px;width:74px;overflow:hidden">Rotation Symmetry</div>

<!-- right panels -->
<div class="t c" style="left:878px;top:43px;font-size:9px;color:#b8b8b8">Lớp</div>
<div class="t" style="left:759px;top:61px;font-size:9.500px">Độ trong</div>
<div class="t" style="left:989px;top:61px;font-size:9.500px">100 %</div>
<div class="t" style="left:759px;top:80px;font-size:9.500px">Pha trộn</div>
<div class="t" style="left:829px;top:80px;font-size:9.500px;color:#b0b0b0">Bình thường</div>
<div class="t" style="left:773px;top:99px;font-size:9.500px">Bảo vệ alpha</div>
<div class="t" style="left:862px;top:99px;font-size:9.500px">Xén bớt</div>
<div class="t" style="left:950px;top:99px;font-size:9.500px">Khóa</div>
<div class="t" style="left:821px;top:125px;font-size:10.500px;color:#fff;font-weight:bold">Lớp2</div>
<div class="t" style="left:821px;top:155px;font-size:10.500px;color:#e0e0e0">Lớp1</div>
<div class="t c" style="left:878px;top:330px;font-size:10px;color:#b8b8b8">Brush Size</div>

<div class="t c n" style="left:770px;top:369px">1</div><div class="t c n" style="left:800px;top:369px">1.5</div><div class="t c n" style="left:830px;top:369px">2</div><div class="t c n" style="left:860px;top:369px">3</div><div class="t c n" style="left:890px;top:369px">4</div><div class="t c n" style="left:920px;top:369px">5</div><div class="t c n" style="left:950px;top:369px">7</div><div class="t c n" style="left:980px;top:369px">10</div>
<div class="t c n" style="left:770px;top:406px">12</div><div class="t c n" style="left:800px;top:406px">15</div><div class="t c n" style="left:830px;top:406px">20</div><div class="t c n" style="left:860px;top:406px">25</div><div class="t c n" style="left:890px;top:406px">30</div><div class="t c n" style="left:920px;top:406px">40</div><div class="t c n" style="left:950px;top:406px">50</div><div class="t c n" style="left:980px;top:406px">70</div>
<div class="t c n" style="left:770px;top:444px">100</div><div class="t c n" style="left:800px;top:444px">150</div><div class="t c n" style="left:830px;top:444px">200</div><div class="t c n" style="left:860px;top:444px">300</div><div class="t c n" style="left:890px;top:444px">400</div><div class="t c n" style="left:920px;top:444px">500</div><div class="t c n" style="left:950px;top:444px">700</div><div class="t c n" style="left:980px;top:444px">1000</div>

<!-- status -->
<div class="t st" style="left:4px;font-size:9px">1600 * 1200 pixel</div>
<div class="t st" style="left:76px;font-size:9.300px">(11.6 * 8.7cm)</div>
<div class="t st" style="left:133px;font-size:9.500px">350 dpi</div>
<div class="t st" style="left:172px">200 %</div>
<div class="t st" style="left:202px">( 366, 254 )</div>
<div class="t st" style="left:251px">Vẽ một đường thẳng bằng cách giữ phím Shift, Thay đổi cỡ cọ bằng cách giữ phím Ctrl, Alt và kéo</div>
</div></div></body></html>
